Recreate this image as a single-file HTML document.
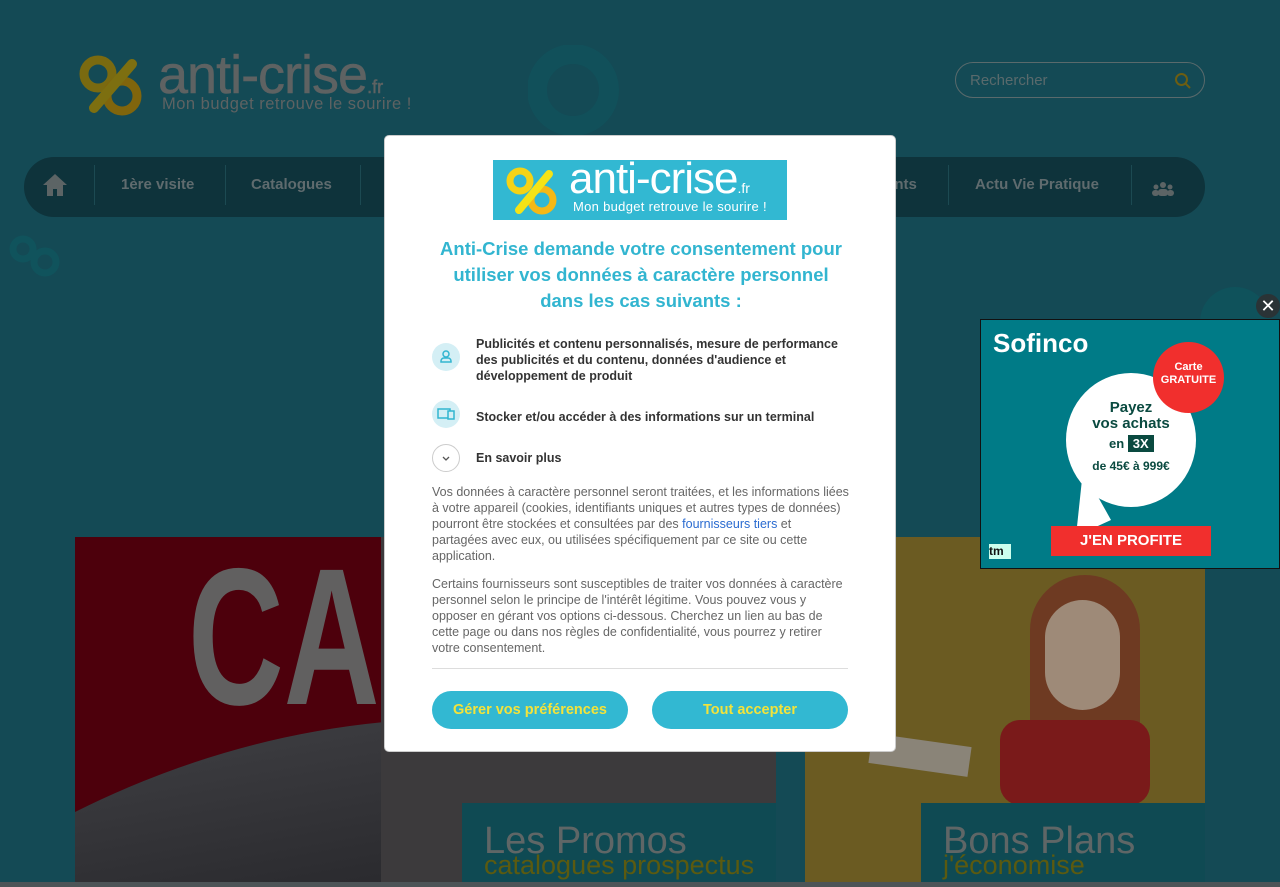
<!DOCTYPE html>
<html><head><meta charset="utf-8"><style>
*{margin:0;padding:0;box-sizing:border-box}
body{width:1280px;height:887px;overflow:hidden;background:#144a55;font-family:"Liberation Sans",sans-serif;position:relative}
.abs{position:absolute}
.nav{left:24px;top:157px;width:1181px;height:60px;background:#0e333b;border-radius:30px}
.nav span{position:absolute;top:19px;color:#5f6b6e;font-weight:bold;font-size:15px}
.sep{position:absolute;top:8px;width:1px;height:40px;background:#1c4a52}
.modal{left:384px;top:135px;width:512px;height:617px;background:#fff;border-radius:5px;border:1px solid #ccc}
.modal h2{position:absolute;left:50px;width:412px;top:100px;text-align:center;color:#32b5d0;font-size:18.5px;line-height:26px;font-weight:bold}
.item{position:absolute;left:48px;font-size:12.5px;color:#333;font-weight:bold;line-height:16px}
.ic{position:absolute;left:47px;width:28px;height:28px;border-radius:50%;background:#d4eff5}
.p{position:absolute;left:47px;width:418px;font-size:12.5px;color:#666;line-height:16px}
.btn{position:absolute;top:555px;width:196px;height:38px;border-radius:19px;background:#32b8d2;color:#f3e33a;font-weight:bold;font-size:14.5px;text-align:center;line-height:38px}
</style></head><body>
<!-- logo -->
<div class="abs" style="left:78px;top:54px">
<svg width="70" height="66"><circle cx="20" cy="20" r="14" fill="none" stroke="#7a6a10" stroke-width="9"/><circle cx="44" cy="42" r="15" fill="none" stroke="#80650c" stroke-width="9"/><line x1="54" y1="10" x2="16" y2="54" stroke="#7d6f10" stroke-width="10" stroke-linecap="round"/></svg></div>
<div class="abs" style="left:158px;top:44px;font-size:54px;color:#5e6262;letter-spacing:-1px;-webkit-text-stroke:0.5px #5e6262">anti-crise<span style="font-size:18px;letter-spacing:0">.fr</span></div>
<div class="abs" style="left:162px;top:95px;font-size:16.5px;color:#5e6262;letter-spacing:0.5px">Mon budget retrouve le sourire !</div>
<div class="abs" style="left:528px;top:45px;width:150px;height:100px"><svg width="160" height="110"><circle cx="45" cy="45" r="36" fill="none" stroke="#11505a" stroke-width="20"/></svg></div>
<div class="abs" style="left:955px;top:62px;width:250px;height:36px;border:1px solid #5a6a6c;border-radius:18px"><span style="position:absolute;left:14px;top:9px;color:#5a6a6c;font-size:15px">Rechercher</span><svg class="abs" style="left:218px;top:9px" width="18" height="18"><circle cx="7.5" cy="7.5" r="5.5" fill="none" stroke="#6d5e12" stroke-width="2"/><line x1="11.5" y1="11.5" x2="16" y2="16" stroke="#6d5e12" stroke-width="2"/></svg></div>
<div class="abs nav">
<svg class="abs" style="left:18px;top:15px" width="26" height="26"><path d="M13 2L1 13h4v11h6v-7h4v7h6V13h4z" fill="#5c6465"/></svg>
<div class="sep" style="left:70px"></div><span style="left:97px">1ère visite</span>
<div class="sep" style="left:201px"></div><span style="left:227px">Catalogues</span>
<div class="sep" style="left:336px"></div>
<span style="left:862px">ents</span>
<div class="sep" style="left:924px"></div><span style="left:951px">Actu Vie Pratique</span>
<div class="sep" style="left:1107px"></div>
<svg class="abs" style="left:1128px;top:20px" width="22" height="20"><circle cx="11" cy="8" r="3" fill="#5c6465"/><circle cx="4" cy="10" r="2.5" fill="#5c6465"/><circle cx="18" cy="10" r="2.5" fill="#5c6465"/><rect x="6" y="12" width="10" height="7" rx="3" fill="#5c6465"/><rect x="0" y="13" width="7" height="6" rx="3" fill="#5c6465"/><rect x="15" y="13" width="7" height="6" rx="3" fill="#5c6465"/></svg>
</div>
<div class="abs" style="left:8px;top:232px"><svg width="55" height="48"><circle cx="15" cy="17" r="10" fill="none" stroke="#10535c" stroke-width="7"/><circle cx="37" cy="30" r="11" fill="none" stroke="#10535c" stroke-width="7"/></svg></div>
<!-- cards -->
<div class="abs" style="left:75px;top:537px;width:310px;height:350px;background:linear-gradient(170deg,#5c5a5e 0%,#3a3a3e 60%,#2a2a2e 100%)"></div>
<svg class="abs" style="left:75px;top:537px" width="310" height="300"><path d="M0 0H310V185Q150 200 0 275z" fill="#4d000c"/></svg>
<div class="abs" style="left:188px;top:540px;font-size:195px;font-weight:bold;color:#616060;transform:scaleX(0.68);transform-origin:left;line-height:1;width:300px;overflow:hidden;white-space:nowrap">CAP</div>
<div class="abs" style="left:381px;top:537px;width:395px;height:350px;background:#3c3a3c"></div>
<div class="abs" style="left:462px;top:803px;width:314px;height:84px;background:#0f4a53"></div>
<div class="abs" style="left:484px;top:820px;font-size:38px;color:#5f6666">Les Promos</div>
<div class="abs" style="left:484px;top:850px;font-size:27px;color:#5b5a10">catalogues prospectus</div>
<div class="abs" style="left:805px;top:537px;width:400px;height:350px;background:#6b5b22"></div>
<div class="abs" style="left:1030px;top:575px;width:110px;height:230px;background:#6e3a22;border-radius:55px 55px 10px 10px"></div>
<div class="abs" style="left:1045px;top:600px;width:75px;height:110px;background:#9e8a78;border-radius:40px"></div>
<div class="abs" style="left:1000px;top:720px;width:150px;height:85px;background:#7a1a1a;border-radius:20px"></div>
<div class="abs" style="left:870px;top:740px;width:100px;height:30px;background:#8a8478;transform:rotate(8deg)"></div>
<div class="abs" style="left:921px;top:803px;width:284px;height:84px;background:#0f4a53"></div>
<div class="abs" style="left:943px;top:820px;font-size:38px;color:#5f6666">Bons Plans</div>
<div class="abs" style="left:943px;top:850px;font-size:27px;color:#5b5a10">j'économise</div>
<div class="abs" style="left:0;top:882px;width:1280px;height:5px;background:#4d5457"></div>
<!-- ad -->
<div class="abs" style="left:1200px;top:287px;width:70px;height:60px;border-radius:35px 35px 0 0;background:#0f525b"></div>
<div class="abs" style="left:980px;top:319px;width:300px;height:250px;background:#007b87;border:1px solid #111">
<div class="abs" style="left:12px;top:8px;color:#fff;font-size:26px;font-weight:bold">Sofinco</div>
<div class="abs" style="left:85px;top:53px;width:130px;height:134px;border-radius:50%;background:#fff"></div>
<svg class="abs" style="left:90px;top:150px" width="50" height="70"><path d="M12 0L5 66 40 50z" fill="#fff"/></svg>
<div class="abs" style="left:85px;top:80px;width:130px;text-align:center;color:#0a4a40;font-weight:bold;font-size:15px;line-height:16px">Payez<br>vos achats</div>
<div class="abs" style="left:128px;top:116px;font-size:13px;color:#0a4a40;font-weight:bold">en <span style="background:#0a4a40;color:#fff;padding:1px 5px">3X</span></div>
<div class="abs" style="left:85px;top:139px;width:130px;text-align:center;font-size:12px;color:#0a4a40;font-weight:bold">de 45€ à 999€</div>
<div class="abs" style="left:172px;top:22px;width:71px;height:71px;border-radius:50%;background:#f12f2d;color:#fff;font-weight:bold;font-size:11px;text-align:center;padding-top:19px;line-height:13px">Carte<br>GRATUITE</div>
<div class="abs" style="left:70px;top:206px;width:160px;height:30px;background:#f12f2d;color:#fff;font-weight:bold;font-size:15px;text-align:center;line-height:30px">J'EN PROFITE</div>
<div class="abs" style="left:8px;top:224px;width:22px;height:15px;background:#cfe;font-size:12px;font-weight:bold;line-height:15px;color:#111">tm</div>
</div>
<div class="abs" style="left:1256px;top:294px;width:24px;height:24px;border-radius:50%;background:#2a3336;color:#fff;text-align:center;line-height:24px;font-size:18px">✕</div>
<!-- modal -->
<div class="abs modal">
<div class="abs" style="left:108px;top:24px;width:294px;height:60px;background:#32b8d2">
<svg class="abs" style="left:12px;top:6px" width="60" height="52"><circle cx="15" cy="15" r="10" fill="none" stroke="#f5d316" stroke-width="7"/><circle cx="37" cy="34" r="11" fill="none" stroke="#f5b816" stroke-width="7"/><line x1="44" y1="8" x2="14" y2="44" stroke="#f5e316" stroke-width="8" stroke-linecap="round"/></svg>
<div class="abs" style="left:76px;top:-6px;font-size:44px;color:#fff;letter-spacing:-1px">anti-crise<span style="font-size:14px;letter-spacing:0">.fr</span></div>
<div class="abs" style="left:80px;top:39px;font-size:13px;color:#fff;letter-spacing:0.3px">Mon budget retrouve le sourire !</div>
</div>
<h2>Anti-Crise demande votre consentement pour utiliser vos données à caractère personnel dans les cas suivants :</h2>
<div class="ic" style="top:207px"><svg width="28" height="28"><circle cx="14" cy="11" r="3" fill="none" stroke="#32b5d0" stroke-width="1.5"/><path d="M9 19h10v-1a3 3 0 0 0-3-3h-4a3 3 0 0 0-3 3z" fill="none" stroke="#32b5d0" stroke-width="1.5"/></svg></div>
<div class="item" style="left:91px;top:200px;width:370px">Publicités et contenu personnalisés, mesure de performance des publicités et du contenu, données d'audience et développement de produit</div>
<div class="ic" style="top:264px"><svg width="28" height="28"><rect x="6" y="9" width="12" height="9" fill="none" stroke="#32b5d0" stroke-width="1.5"/><rect x="16" y="11" width="6" height="8" fill="#d4eff5" stroke="#32b5d0" stroke-width="1.5"/></svg></div>
<div class="item" style="left:91px;top:273px">Stocker et/ou accéder à des informations sur un terminal</div>
<div class="ic" style="top:308px;background:#fff;border:1px solid #ccc"><svg width="26" height="26"><path d="M10 12l3 3 3-3" fill="none" stroke="#555" stroke-width="1.3"/></svg></div>
<div class="item" style="left:91px;top:314px">En savoir plus</div>
<div class="p" style="top:348px">Vos données à caractère personnel seront traitées, et les informations liées à votre appareil (cookies, identifiants uniques et autres types de données) pourront être stockées et consultées par des <span style="color:#2a6bd0">fournisseurs tiers</span> et partagées avec eux, ou utilisées spécifiquement par ce site ou cette application.</div>
<div class="p" style="top:440px">Certains fournisseurs sont susceptibles de traiter vos données à caractère personnel selon le principe de l'intérêt légitime. Vous pouvez vous y opposer en gérant vos options ci-dessous. Cherchez un lien au bas de cette page ou dans nos règles de confidentialité, vous pourrez y retirer votre consentement.</div>
<div class="abs" style="left:47px;top:532px;width:416px;height:1px;background:#ddd"></div>
<div class="btn" style="left:47px">Gérer vos préférences</div>
<div class="btn" style="left:267px">Tout accepter</div>
</div>
</body></html>
